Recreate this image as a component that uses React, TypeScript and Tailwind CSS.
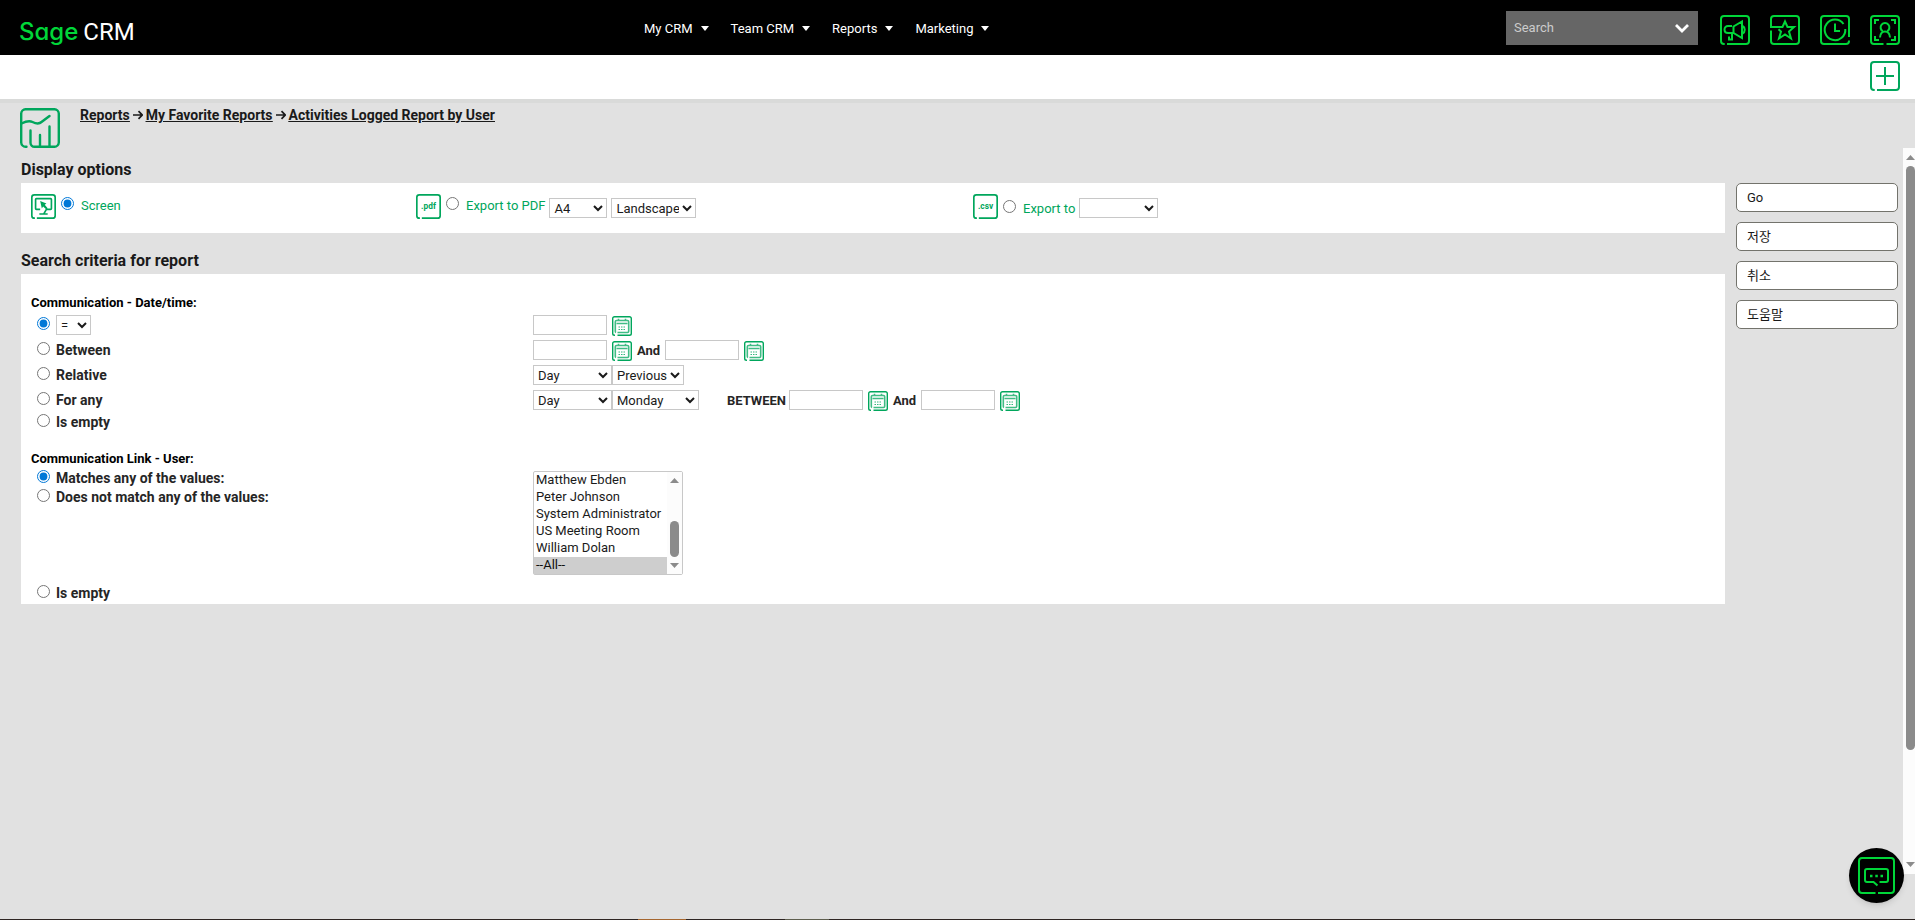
import type { ReactNode } from 'react';

const NAV = ['My CRM', 'Team CRM', 'Reports', 'Marketing'];
const ACTIONS = ['Go', '저장', '취소', '도움말'];
const USERS = ['Matthew Ebden', 'Peter Johnson', 'System Administrator', 'US Meeting Room', 'William Dolan', '--All--'];

const FRAME = 'M7 29H26a3 3 0 0 0 3-3V4a3 3 0 0 0-3-3H4a3 3 0 0 0-3 3v22a3 3 0 0 0 3 3h.7';

function Icon({ children, className = 'size-[30px]' }: { children: ReactNode; className?: string }) {
  return (
    <svg viewBox="0 0 30 30" className={`${className} shrink-0`} fill="none" stroke="currentColor" strokeWidth="2" aria-hidden="true">
      {children}
    </svg>
  );
}

function MegaphoneIcon() {
  return (
    <Icon>
      <path d={FRAME} />
      <path d="M12 11H8a3.500 3.500 0 0 0-3.500 3.500c0 2 1.200 3.500 3.500 3.500H13.500L22 23V6.500L13.500 11.500V17.500M22.500 11c3 1.500 3 6 0 7.500M12 19v5.500H9V21.500" />
    </Icon>
  );
}

function StarIcon() {
  return (
    <Icon>
      <path d="M1 15.500V26a3 3 0 0 0 3 3h22a3 3 0 0 0 3-3V4a3 3 0 0 0-3-3H4a3 3 0 0 0-3 3v8h11.500L15 6.500l2.500 5.500h6.500l-5 4.500 2 7-6-4-6 4 2-7-2.500-2.200" />
    </Icon>
  );
}

function ClockIcon() {
  return (
    <Icon>
      <path d="M29 22V4a3 3 0 0 0-3-3H4a3 3 0 0 0-3 3v22a3 3 0 0 0 3 3h22a3 3 0 0 0 3-3v-.6" />
      <path d="M23.500 9a10.300 10.300 0 1 0 1.800 5M15 8.500V16h5" />
    </Icon>
  );
}

function PersonIcon() {
  return (
    <Icon>
      <path d="M16.500 29H26a3 3 0 0 0 3-3V4a3 3 0 0 0-3-3H4a3 3 0 0 0-3 3v22a3 3 0 0 0 3 3h9.500" />
      <path d="M5 9V5h4M21 5h4v4M25 21v4h-4M9 25h-4v-4" />
      <path d="M12.800 16.300a4.400 4.400 0 1 1 4.400 0M10 22.500c.3-4 2.200-6 5-6s4.700 2 5 6" />
    </Icon>
  );
}

function ScreenIcon() {
  return (
    <Icon className="size-[25px]">
      <path d={FRAME} />
      <path d="M11 18.500H6.500a1 1 0 0 1-1-1V6.500a1 1 0 0 1 1-1h17a1 1 0 0 1 1 1v11a1 1 0 0 1-1 1h-5L15.500 23.500M10 24h10" />
      <path d="M11 8.500l7.500 3-2 1.500 3.500 4-1.500 1.500-4-3.500-1.500 2.500z" fill="currentColor" stroke="none" />
    </Icon>
  );
}

function FileIcon({ ext }: { ext: string }) {
  return (
    <Icon className="size-[25px]">
      <path d={FRAME} />
      <text x="15" y="18" textAnchor="middle" fontSize="10" fontWeight="700" fill="currentColor" stroke="none">{ext}</text>
    </Icon>
  );
}

function ReportIcon() {
  return (
    <svg viewBox="0 0 40 40" className="size-10 shrink-0 text-[#00a65c]" fill="none" stroke="currentColor" strokeWidth="2.400" strokeLinecap="round" aria-hidden="true">
      <path d="M6.500 38.800H5.500A4.500 4.500 0 0 1 1.200 34.500V5.500A4.500 4.500 0 0 1 5.500 1.200h29A4.500 4.500 0 0 1 38.800 5.500v29a4.500 4.500 0 0 1-4.300 4.300H14.500a4 4 0 0 1-4-4V22.500M20 27v12M29.500 18.500V39" />
      <path d="M1.500 15.500c5-2.500 8-3 11-1.500 3.500 1.700 6.500 2.300 9 0L29.500 8" />
    </svg>
  );
}

function CalendarButton({ label }: { label: string }) {
  return (
    <button type="button" aria-label={label} className="ml-[5px] mt-px size-5 shrink-0 text-[#00a65c]">
      <svg viewBox="0 0 20 20" className="size-5" fill="none" stroke="currentColor" aria-hidden="true">
        <path d="M5.500 19.300H17.500a1.800 1.800 0 0 0 1.800-1.800v-15A1.800 1.800 0 0 0 17.500.7h-15A1.800 1.800 0 0 0 .7 2.500v15a1.800 1.800 0 0 0 1.800 1.800h.5" strokeWidth="1.400" />
        <path d="M5.500 16.500h10a1.200 1.200 0 0 0 1.200-1.200V5.700a1.200 1.200 0 0 0-1.200-1.200h-11a1.200 1.200 0 0 0-1.200 1.200v9.600c0 .6.200 1 .7 1.200M4.500 7.500h11M6.500 2.800v2.500M13.500 2.800v2.500" strokeOpacity=".75" strokeWidth="1.600" />
        <path d="M6.500 11h7.500M6.500 13.500h7.500" strokeDasharray="1.500 1" strokeOpacity=".8" />
      </svg>
    </button>
  );
}

function Picker({ label, options, className }: { label: string; options: string[]; className: string }) {
  return (
    <select aria-label={label} className={`h-5 shrink-0 border border-[#c8c8c8] bg-white font-normal text-[#1a1a1a] ${className}`}>
      {options.map(o => <option key={o}>{o}</option>)}
    </select>
  );
}

function DateField({ label }: { label: string }) {
  return (
    <>
      <input type="text" aria-label={label} className="h-5 w-[74px] shrink-0 border border-[#c8c8c8] bg-white px-1" />
      <CalendarButton label={`${label} calendar`} />
    </>
  );
}

function RadioLabel({ name, label, checked, children }: { name: string; label: string; checked?: boolean; children?: ReactNode }) {
  return (
    <div className="flex items-start pl-4">
      <label className="flex items-start gap-[6px] text-sm leading-[21px]">
        <input type="radio" name={name} aria-label={label} defaultChecked={checked} className="mt-[2px] size-[13px] accent-[#0078d7]" />
        {!children && label}
      </label>
      {children}
    </div>
  );
}

function Header() {
  return (
    <header className="grid h-[55px] grid-cols-[644fr_862fr_409fr] bg-black text-white">
      <a href="#" className="flex items-center gap-[5px] pl-[19px] pt-2 text-2xl">
        <span className="font-['Inter',sans-serif] font-medium text-[#00d639] [font-feature-settings:'cv11']">Sage</span>
        <span>CRM</span>
      </a>
      <nav className="flex items-center gap-[22px] pt-[2px]">
        {NAV.map(n => (
          <button key={n} type="button" className="flex items-center gap-2">
            {n}
            <svg viewBox="0 0 8 5" className="h-[5px] w-2" fill="currentColor" aria-hidden="true"><path d="M0 0h8L4 5z" /></svg>
          </button>
        ))}
      </nav>
      <div className="flex items-start justify-between pr-[15px]">
        <div className="mt-[11px] flex h-[34px] w-[192px] items-center bg-[#666] pl-2 pr-[9px]">
          <input type="text" aria-label="Search" placeholder="Search" className="min-w-0 flex-1 placeholder:text-[#ccc]" />
          <button type="button" aria-label="Search scope">
            <svg viewBox="0 0 14 9" className="h-[9px] w-[14px]" fill="none" stroke="currentColor" strokeWidth="2.800" aria-hidden="true"><path d="M1 1l6 6 6-6" /></svg>
          </button>
        </div>
        <div className="mt-[15px] flex gap-5 text-[#00d639]">
          <button type="button" aria-label="Announcements"><MegaphoneIcon /></button>
          <button type="button" aria-label="Favorites"><StarIcon /></button>
          <button type="button" aria-label="Recent"><ClockIcon /></button>
          <button type="button" aria-label="Profile"><PersonIcon /></button>
        </div>
      </div>
    </header>
  );
}

function Arrow() {
  return (
    <svg viewBox="0 0 10 10" className="mx-[3px] size-[10px]" fill="none" stroke="currentColor" strokeWidth="1.700" aria-hidden="true">
      <path d="M0 5h9M5.500 1.200L9.200 5 5.500 8.800" />
    </svg>
  );
}

function DisplayOptions() {
  return (
    <div className="grid h-[50px] grid-cols-[385fr_557fr_752fr] bg-white pl-[10px] pt-[11px] text-[#00a65c]">
      <div className="flex items-start">
        <ScreenIcon />
        <label className="flex items-start gap-[7px] pl-[5px] leading-6">
          <input type="radio" name="output" defaultChecked className="mt-[3px] size-[13px] accent-[#0078d7]" />
          Screen
        </label>
      </div>
      <div className="flex items-start">
        <FileIcon ext=".pdf" />
        <label className="flex items-start gap-[7px] pl-[5px] leading-6">
          <input type="radio" name="output" className="mt-[3px] size-[13px] accent-[#0078d7]" />
          Export to PDF
        </label>
        <div className="flex gap-1 pl-1 pt-1">
          <Picker label="Paper size" options={['A4', 'Letter']} className="w-[58px]" />
          <Picker label="Orientation" options={['Landscape', 'Portrait']} className="w-[85px]" />
        </div>
      </div>
      <div className="flex items-start">
        <FileIcon ext=".csv" />
        <div className="flex items-start pt-[3px]">
          <label className="flex items-start gap-[7px] pl-[5px] leading-6">
            <input type="radio" name="output" className="mt-[3px] size-[13px] accent-[#0078d7]" />
            Export to
          </label>
          <div className="pl-1 pt-px">
            <Picker label="Export format" options={['', 'CSV']} className="w-[79px]" />
          </div>
        </div>
      </div>
    </div>
  );
}

function SearchCriteria() {
  return (
    <div className="bg-white pt-5 font-bold text-[#262626]">
      <h3 className="mb-[3px] pl-[10px] leading-[18px] text-black">Communication - Date/time:</h3>
      <div className="grid auto-rows-[25px] grid-cols-[512fr_1192fr]">
        <RadioLabel name="date" label="Equals" checked>
          <div className="pl-[6px]"><Picker label="Operator" options={['=', '>', '<']} className="w-[35px]" /></div>
        </RadioLabel>
        <div className="flex items-start"><DateField label="Date" /></div>

        <RadioLabel name="date" label="Between" />
        <div className="flex items-start leading-[22px]">
          <DateField label="From" />
          <span className="w-[33px] text-center">And</span>
          <DateField label="To" />
        </div>

        <RadioLabel name="date" label="Relative" />
        <div className="flex items-start">
          <Picker label="Relative unit" options={['Day', 'Week']} className="w-[79px]" />
          <Picker label="Relative direction" options={['Previous', 'Next']} className="w-[72px]" />
        </div>

        <RadioLabel name="date" label="For any" />
        <div className="flex items-start leading-[22px]">
          <Picker label="Period unit" options={['Day', 'Week']} className="w-[79px]" />
          <Picker label="Weekday" options={['Monday', 'Tuesday']} className="w-[87px]" />
          <span className="w-[90px] pr-[3px] text-right">BETWEEN</span>
          <DateField label="Period from" />
          <span className="w-[33px] text-center">And</span>
          <DateField label="Period to" />
        </div>
      </div>
      <div className="-mt-[3px]"><RadioLabel name="date" label="Is empty" /></div>

      <h3 className="mt-[17px] pl-[10px] leading-[18px] text-black">Communication Link - User:</h3>
      <div className="grid grid-cols-[512fr_1192fr] pb-2">
        <div className="grid auto-rows-[19px]">
          <RadioLabel name="user" label="Matches any of the values:" checked />
          <RadioLabel name="user" label="Does not match any of the values:" />
        </div>
        <div className="mt-[3px] flex h-[104px] w-[150px] rounded-xs border border-[#c8c8c8] font-normal">
          <select multiple size={6} aria-label="Users" defaultValue={['--All--']} className="h-[102px] flex-1 overflow-hidden text-[#1a1a1a] outline-none [scrollbar-width:none]">
            {USERS.map(u => <option key={u} className="h-[17px] min-h-0 px-[2px] py-0 leading-[17px]">{u}</option>)}
          </select>
          <div className="flex w-[15px] flex-col items-center bg-[#fcfcfc] py-[6px] text-[#8b8b8b]">
            <svg viewBox="0 0 9 5" className="h-[5px] w-[9px]" fill="currentColor" aria-hidden="true"><path d="M0 5h9L4.500 0z" /></svg>
            <div className="mb-[6px] mt-auto h-9 w-[9px] rounded-full bg-[#8b8b8b]" />
            <svg viewBox="0 0 9 5" className="h-[5px] w-[9px]" fill="currentColor" aria-hidden="true"><path d="M0 0h9L4.500 5z" /></svg>
          </div>
        </div>
      </div>
      <RadioLabel name="user" label="Is empty" />
    </div>
  );
}

export default function App() {
  return (
    <div className="flex min-h-screen flex-col bg-[#e1e1e1] font-['Roboto','Noto_Sans_CJK_KR',sans-serif] text-[13px] leading-5 text-[#1a1a1a]">
      <Header />
      <div className="flex h-12 justify-end border-b-4 border-[#d9dad9] bg-white pr-[15px] pt-[6px] text-[#00a65c]">
        <button type="button" aria-label="New" className="size-[30px]">
          <Icon>
            <path d={FRAME} />
            <path d="M15 6v18M6 15h18" />
          </Icon>
        </button>
      </div>

      <div className="flex gap-5 pl-5 pt-[5px]">
        <ReportIcon />
        <nav aria-label="Breadcrumb" className="flex h-[14px] items-center text-sm font-bold underline">
          <a href="#">Reports</a>
          <Arrow />
          <a href="#">My Favorite Reports</a>
          <Arrow />
          <a href="#">Activities Logged Report by User</a>
        </nav>
      </div>

      <div className="mb-[45px] flex flex-1">
        <main className="min-w-0 flex-1 pl-[21px] pt-3">
          <h2 className="pb-[3px] text-base leading-5 font-bold">Display options</h2>
          <DisplayOptions />
          <h2 className="pb-[3px] pt-[18px] text-base leading-5 font-bold">Search criteria for report</h2>
          <SearchCriteria />
        </main>
        <aside className="flex w-[178px] flex-col gap-[10px] pl-[11px] pr-[5px] pt-[35px]">
          {ACTIONS.map(a => (
            <button key={a} type="button" className="h-[29px] rounded-[5px] border border-[#73736c] bg-white pl-[10px] text-left">{a}</button>
          ))}
        </aside>
        <div className="flex w-3 flex-col items-end bg-[#fcfcfc] py-[7px] text-[#8b8b8b]">
          <svg viewBox="0 0 9 5" className="h-[5px] w-[9px]" fill="currentColor" aria-hidden="true"><path d="M0 5h9L4.500 0z" /></svg>
          <div className="mb-auto mt-[6px] h-[82%] w-[9px] rounded-full bg-[#8b8b8b]" />
          <svg viewBox="0 0 9 5" className="h-[5px] w-[9px]" fill="currentColor" aria-hidden="true"><path d="M0 0h9L4.500 5z" /></svg>
        </div>
      </div>

      <div className="flex h-px bg-[#2e2523]">
        <div className="ml-[33.3%] w-[2.5%] bg-[#a5662f]" />
        <div className="ml-[5.2%] w-[2.3%] bg-[#5e5e4e]" />
      </div>

      <button type="button" aria-label="Chat" className="fixed bottom-[17px] right-[11px] flex size-[55px] items-center justify-center rounded-full bg-black text-[#00d639] shadow-md">
        <svg viewBox="0 0 37 37" className="size-[37px]" fill="none" stroke="currentColor" strokeWidth="2" aria-hidden="true">
          <path d="M20 36h13a3 3 0 0 0 3-3V4a3 3 0 0 0-3-3H4a3 3 0 0 0-3 3v29a3 3 0 0 0 3 3h13.500" />
          <path d="M21.500 25H28a2 2 0 0 0 2-2v-9a2 2 0 0 0-2-2H9a2 2 0 0 0-2 2v9a2 2 0 0 0 2 2h6.500l4 3.500" />
          <path d="M12 19h2.500M17.300 19h2.500M22.500 19H25" strokeWidth="2.500" />
        </svg>
      </button>
    </div>
  );
}
